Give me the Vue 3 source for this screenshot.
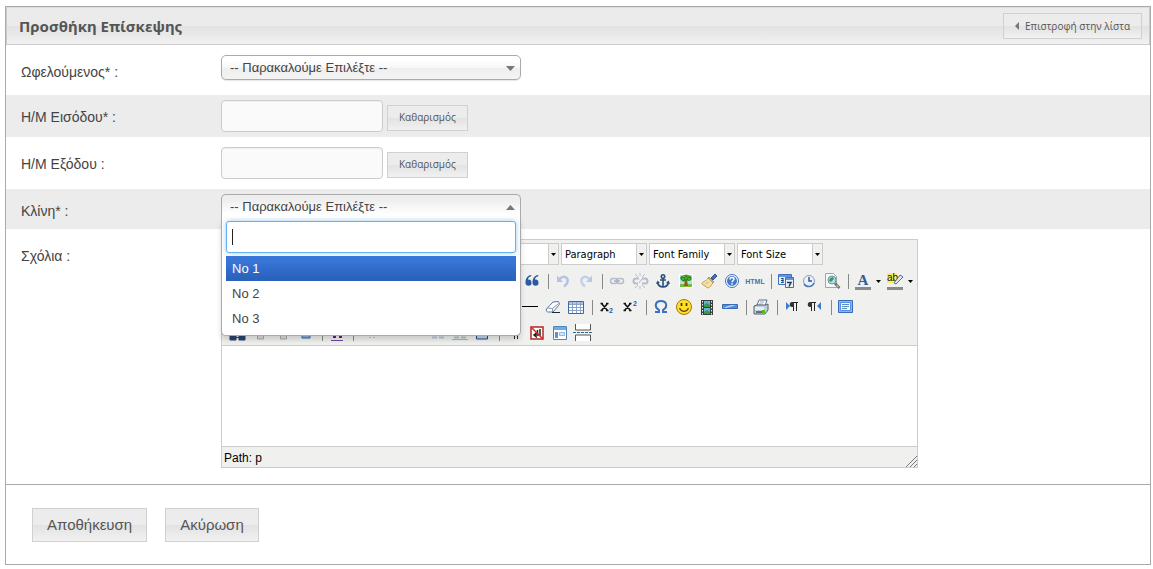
<script setup>
import { ref } from 'vue'

const placeholder = '-- Παρακαλούμε Επιλέξτε --'
const beneficiary = ref('')
const bed = ref('')
const beds = ['No 1', 'No 2', 'No 3']
const highlighted = ref(0)

const lists = [
  { label: 'Styles', text: '' },
  { label: 'Format', text: 'Paragraph' },
  { label: 'Font family', text: 'Font Family' },
  { label: 'Font size', text: 'Font Size' },
]

const sans = 'font-family="Liberation Sans, sans-serif"'
const serif = 'font-family="Liberation Serif, serif"'

const icons = {
  quote: '<path d="M9 4C5 4.500 3.500 8 3.500 11.500A3 3 0 1 0 6 8.700C6 7 7 5.800 9.500 5zM16 4c-4 .5-5.500 4-5.500 7.500A3 3 0 1 0 13 8.700c0-1.700 1-2.900 3.500-3.700z" fill="#2d5a9e"/>',
  undo: '<path d="M6.500 8c4-4 9-2 8 3-.4 2-1.500 3-3.500 4.500" fill="none" stroke="#b4c3e2" stroke-width="2.500"/><path d="M4 4.500v6.500h6z" fill="#b4c3e2"/>',
  redo: '<path d="M13.500 8c-4-4-9-2-8 3 .4 2 1.500 3 3.500 4.500" fill="none" stroke="#c4d1e9" stroke-width="2.500"/><path d="M16 4.500v6.500h-6z" fill="#b9c8e5"/>',
  link: '<g fill="none" stroke="#b5bccb" stroke-width="1.500"><rect x="3.500" y="7.500" width="7" height="5" rx="2.500"/><rect x="9.500" y="7.500" width="7" height="5" rx="2.500"/></g><path d="M7 10h6" stroke="#a5afc4" stroke-width="1.500"/>',
  unlink: '<g fill="none" stroke="#b5bccb" stroke-width="2"><path d="M9 7.500H6a2.500 2.500 0 0 0 0 5h2M12 7.500h3a2.500 2.500 0 0 1 0 5h-3"/></g><path d="M10 2v3M10 15v3M5 3l3 3M15 3l-3 3M5 17l3-3M15 17l-3-3M9 12l3-4" stroke="#b9bdc6"/>',
  anchor: '<g fill="none" stroke="#2b4e7c" stroke-width="1.600"><circle cx="10" cy="5.500" r="1.700"/><path d="M10 7v9M7 9h6M4.500 11c.5 3 2.500 5 5.500 5s5-2 5.500-5"/></g><path d="M3 13l1.500-3.500L7 12zM17 13l-1.500-3.500L13 12z" fill="#2b4e7c"/>',
  image: '<path d="M3 3h14v14H3z" fill="#fff"/><path d="M4 4h12v9H4z" fill="#b9dcf4"/><path d="M4 13h12v3H4z" fill="#76bd32"/><path d="M9 9h2l1 6H8z" fill="#915820"/><path d="M4.500 8c-1-3 2-3 4-4 3-1 8 1 7 4 0 2-3 2.500-5 1.500-2 2-5 1-6-1.500z" fill="#2b8c20"/><path d="M7 5.500h2M11 5h2M12 8h2M6 8h2M9 7h2" stroke="#75c63c"/>',
  cleanup: '<path d="M12 7l4-4 2 2-4 4z" fill="#476fad" stroke="#2d568e"/><path d="M10 6l5 5-2 1-4-5z" fill="#b3bbc4" stroke="#707b86" stroke-width=".7"/><path d="M9 7l5 5c-2 2-3 5-5 5l-6-4c-1-2 5-3 6-6z" fill="#f4e2a6" stroke="#b98e3f" stroke-width=".8"/><path d="M6 13l4-2" stroke="#d9b974"/>',
  help: '<circle cx="10" cy="10" r="6.500" fill="#fff" stroke="#3d72be"/><circle cx="10" cy="10" r="5" fill="#4179cc"/><path d="M8 8.500c0-3 4-2.500 4-.5 0 1.500-2 1.500-2 3.300M10 12.300v1.500" fill="none" stroke="#fff" stroke-width="1.500"/>',
  html: `<text x="10" y="12.500" text-anchor="middle" font-size="7" font-weight="bold" fill="#4178a9" ${sans}>HTML</text>`,
  date: '<path d="M2.500 3.500h13v10h-13z" fill="#e7f0fc" stroke="#3d70b7"/><path d="M3 4h12v2H3z" fill="#6495dc"/><path d="M5 7.500h2.500M5 9.500h2.500M5 11.500h2.500M7 7.500v4" fill="none" stroke="#174378"/><path d="M9.500 6.500h8v10h-8z" fill="#e7f0fc" stroke="#3d70b7"/><path d="M10 7h7v2h-7z" fill="#6495dc"/><path d="M11 11.500h4l-2 4" fill="none" stroke="#22384e" stroke-width="1.500"/>',
  time: '<circle cx="10" cy="10" r="5.500" fill="#eaf2ff" stroke="#879dba"/><path d="M5 13c2 3 8 4 10-1" fill="none" stroke="#4b79b6" stroke-width="1.500"/><path d="M10 6v4h3" fill="none" stroke="#315a90" stroke-width="1.500"/>',
  preview: '<path d="M3.500 2.500h8l3 3v11h-11z" fill="#f3f8fa" stroke="#98a8af"/><circle cx="10" cy="9" r="4" fill="#b8dde9" stroke="#6f949a"/><path d="M8 7l3-1 1 2-3 3-2-1z" fill="#3d9c54"/><path d="M13 12.500l4.500 4.500" stroke="#5e6f80" stroke-width="2.500"/><path d="M14.500 14l2 2" stroke="#d7b053" stroke-width="1.500"/>',
  forecolor: `<text x="10" y="14" text-anchor="middle" font-size="15" font-weight="bold" fill="#315d96" ${serif}>A</text><path d="M2 16h16v3H2z" fill="#8a8a8a"/>`,
  backcolor: `<path d="M2 2h10v10H2z" fill="#fcee61"/><text x="2" y="10" font-size="10" fill="#111" ${sans}>ab</text><path d="M9 12l6-8 3 2-7 7z" fill="#dce7ef" stroke="#4f7298"/><path d="M2 16h16v3H2z" fill="#8a8a8a"/>`,
  rule: '<path d="M2 9.500h16" stroke="#000"/>',
  eraser: '<path d="M3.500 12L10 5l5-.5c2 1 1.500 3 .5 4l-5.500 6.500H5.500c-2 0-2.500-1-2-3z" fill="#fff" stroke="#58729c"/><path d="M4.500 11l5 .5 6-5M9.500 11.500V15" fill="none" stroke="#8198bb"/><path d="M9 15.500h8" stroke="#1f2933"/>',
  table: '<path d="M2.500 4.500h15v12h-15z" fill="#fff" stroke="#42679a"/><path d="M3 5h14v2H3z" fill="#a9c5e9"/><path d="M3 7.500h14M3 10.500h14M3 13.500h14M6.500 5v11M10.500 5v11M14.500 5v11" stroke="#8aa5cb"/>',
  sub: `<path d="M4.500 6.500l6 7M10.500 6.500l-6 7M3.500 6.500H6M9 6.500h2.500M3.500 13.500H6M9 13.500h2.500" stroke="#111" stroke-width="1.600"/><text x="12" y="16" font-size="7" font-weight="bold" fill="#2260b8" ${sans}>2</text>`,
  sup: `<path d="M4.500 6.500l6 7M10.500 6.500l-6 7M3.500 6.500H6M9 6.500h2.500M3.500 13.500H6M9 13.500h2.500" stroke="#111" stroke-width="1.600"/><text x="13" y="9" font-size="7" font-weight="bold" fill="#2260b8" ${sans}>2</text>`,
  omega: '<path d="M4 15h4v-2c-5-3-4-9 2-9s7 6 2 9v2h4" fill="none" stroke="#3c70be" stroke-width="2"/>',
  smile: '<circle cx="10" cy="10" r="7.500" fill="#ffdf27" stroke="#a4780b"/><path d="M7.500 6v3M12.500 6v3" stroke="#4b3600" stroke-width="1.700"/><path d="M5.500 11c2 4.500 7 4.500 9 0" fill="none" stroke="#684900" stroke-width="1.200"/>',
  media: '<path d="M4 3h12v15H4z" fill="#393e3e"/><path d="M7 4h6v6H7zM7 11h6v6H7z" fill="#65b6cf"/><path d="M7 8l3-2 3 2v2H7zM7 15l3-2 3 2v2H7z" fill="#39964a"/><path d="M5.500 4v14M14.500 4v14" stroke="#e4eded" stroke-dasharray="1.500 1.500"/>',
  advhr: '<path d="M2.500 7.500h15v4h-15z" fill="#5a8bd1" stroke="#376bb5"/><path d="M3 11l8-3h5l-9 3z" fill="#b7d2f2"/>',
  print: '<path d="M6 8l2-5h8l-2 6z" fill="#fff" stroke="#54718c"/><path d="M9 5h4M8 7h4" stroke="#93a8b8"/><path d="M3 9l3-1h9l2-1v6l-3 4H3z" fill="#c3ced7" stroke="#4e6579"/><path d="M4 10h9v3H4z" fill="#e8eef1"/><path d="M5 14h8v2H5z" fill="#65717b"/><path d="M11 13h3v3h-3z" fill="#4dbd22"/>',
  ltr: '<path d="M4 5l4 4-4 4z" fill="#3d7bd0"/><path d="M10 5.500h6M11.500 5v9M14.500 5v9" stroke="#222"/><path d="M12 5v5h-2c-3 0-3-5 0-5z" fill="#333"/>',
  rtl: '<path d="M16 5l-4 4 4 4z" fill="#3d7bd0"/><path d="M5 5.500h6M6.500 5v9M9.500 5v9" stroke="#222"/><path d="M7 5v5H5c-3 0-3-5 0-5z" fill="#333"/>',
  full: '<path d="M2.500 3.500h14v12h-14z" fill="#8fb6ea" stroke="#356dbc"/><path d="M4.500 5.500h10v8h-10z" fill="#f1f7ff" stroke="#5b91dc"/><path d="M6 7.500h7M6 9.500h7M6 11.500h5" stroke="#5e8bc8"/>',
  find: '<path d="M3 13h6v4H3zM12 13h6v4h-6zM9 14.500h3" fill="#29446e" stroke="#29446e"/>',
  paste: '<path d="M7.500 12v4h6v-4" fill="#ddd" stroke="#aaa"/>',
  word: '<path d="M6 12h8v3H6z" fill="#8fb2e0" stroke="#3768ae"/>',
  styleprops: '<path d="M6 14h3M12 14h3" stroke="#4c2d75" stroke-width="2"/><path d="M4 17.500h12" stroke="#7443a8"/>',
  cite: '<path d="M11 14.500h2M15 14.500h2" stroke="#b7c8dd"/>',
  ins: '<path d="M5 14.500h5M12 14.500h5" stroke="#b7c8dd" stroke-width="2"/>',
  acronym: '<path d="M4 14.500h5M11 14.500h5" stroke="#b3c5c5" stroke-width="2"/><path d="M2 16.500h16" stroke="#91c98d"/>',
  attribs: '<path d="M3.500 10v6h11v-6" fill="#c2d4eb" stroke="#234c7b"/>',
  pilcrow: '<path d="M10.500 8v8M13.500 8v8" stroke="#222"/>',
  nbsp: '<path d="M4 4h12v12H4z" fill="#fff" stroke="#b72626" stroke-width="1.500"/><path d="M13 6v6H8M10.500 7v5M10 9.500L7 12l3 2.500" fill="none" stroke="#222" stroke-width="1.500"/><path d="M4 4l12 12" stroke="#d52b2b" stroke-width="1.500"/>',
  template: '<path d="M3.500 3.500h13v13h-13z" fill="#fff" stroke="#4b87c2"/><path d="M4 4h12v3H4z" fill="#77aadc"/><path d="M5 9h3v6H5z" fill="#5b91dc"/><path d="M9.500 9.500h5v3h-5z" fill="#d5e7f9" stroke="#8fb7e3"/>',
  pagebreak: '<path d="M2.500 1v6h15V1M2.500 18v-6h15v6" fill="#fff" stroke="#555"/><path d="M0 9.500h20" stroke="#286a9d" stroke-dasharray="3 1"/>',
}

const toolbars = [
  { name: 'links', items: ['quote', '|', 'undo', 'redo', '|', 'link', 'unlink', 'anchor', 'image', 'cleanup', 'help', 'html', '|', 'date', 'time', 'preview', '|', 'forecolor', 'v', 'backcolor', 'v'] },
  { name: 'insert', items: ['rule', 'eraser', 'table', '|', 'sub', 'sup', '|', 'omega', 'smile', 'media', 'advhr', '|', 'print', '|', 'ltr', 'rtl', '|', 'full'] },
  { name: 'extras', items: ['find', 'paste', 'paste', 'word', '|', 'styleprops', '|', 'cite', '', '', 'ins', 'acronym', 'attribs', '|', 'pilcrow', 'nbsp', 'template', 'pagebreak'] },
]
</script>

<template>
  <form class="panel" @submit.prevent>
    <header class="head">
      <h1>Προσθήκη Επίσκεψης</h1>
      <button type="button" class="btn small back">
        <svg width="4" height="8" viewBox="0 0 4 8" aria-hidden="true"><path d="M4 0v8L0 4z" fill="#777" /></svg>
        Επιστροφή στην λίστα
      </button>
    </header>

    <div class="row first">
      <label class="name" for="beneficiary">Ωφελούμενος* :</label>
      <div class="choice">
        <select id="beneficiary" v-model="beneficiary"><option value="">{{ placeholder }}</option></select>
        <svg class="caret" width="9" height="5" viewBox="0 0 9 5" aria-hidden="true"><path d="M0 0h9L4.500 5z" /></svg>
      </div>
    </div>

    <div class="row alt">
      <label class="name" for="entry">Η/Μ Εισόδου* :</label>
      <div class="date">
        <input id="entry" type="text" />
        <button type="button" class="btn small">Καθαρισμός</button>
      </div>
    </div>

    <div class="row">
      <label class="name" for="exit">Η/Μ Εξόδου :</label>
      <div class="date">
        <input id="exit" type="text" />
        <button type="button" class="btn small">Καθαρισμός</button>
      </div>
    </div>

    <div class="row alt bed">
      <label class="name" for="bed">Κλίνη* :</label>
      <div class="choice open">
        <select id="bed" v-model="bed"><option value="">{{ placeholder }}</option></select>
        <svg class="caret" width="9" height="5" viewBox="0 0 9 5" aria-hidden="true"><path d="M0 5h9L4.500 0z" /></svg>
        <div class="drop">
          <div class="search">
            <input type="text" aria-label="Κλίνη" />
            <span class="cursor"></span>
          </div>
          <ul role="listbox">
            <li v-for="(b, i) in beds" :key="b" role="option" :class="{ on: i === highlighted }" @mouseenter="highlighted = i">{{ b }}</li>
          </ul>
        </div>
      </div>
    </div>

    <div class="row notes">
      <label class="name" for="notes">Σχόλια :</label>
      <div class="editor">
        <div class="tools">
          <div class="lists">
            <div v-for="l in lists" :key="l.label" class="list">
              <select :aria-label="l.label"><option>{{ l.text }}</option></select>
              <svg width="5" height="3" viewBox="0 0 5 3" aria-hidden="true"><path d="M0 0h5L2.500 3z" /></svg>
            </div>
          </div>
          <div v-for="bar in toolbars" :key="bar.name" class="bar" :class="bar.name">
            <template v-for="(item, i) in bar.items" :key="i">
              <span v-if="item === '|'" class="sep"></span>
              <button v-else-if="item === 'v'" type="button" class="more" aria-label="more">
                <svg width="5" height="3" viewBox="0 0 5 3"><path d="M0 0h5L2.500 3z" /></svg>
              </button>
              <button v-else type="button" class="tool" :aria-label="item">
                <svg width="20" height="20" viewBox="0 0 20 20" v-html="icons[item]"></svg>
              </button>
            </template>
          </div>
        </div>
        <textarea id="notes"></textarea>
        <div class="status">
          <span>Path: p</span>
          <svg width="11" height="11" viewBox="0 0 11 11" aria-hidden="true"><path d="M0 11L11 0M4 11l7-7M8 11l3-3" stroke="#777" /></svg>
        </div>
      </div>
    </div>

    <footer class="foot">
      <button type="submit" class="btn">Αποθήκευση</button>
      <button type="button" class="btn">Ακύρωση</button>
    </footer>
  </form>
</template>

<style>
body {
  background: #fff;
}
</style>

<style scoped>
* {
  box-sizing: border-box;
}
.panel {
  margin: 6px 2px 4px 5px;
  border: 1px solid #aaa;
  font: 14px "Liberation Sans", Arial, sans-serif;
  color: #444;
}
button, input, select, textarea {
  font: inherit;
  color: inherit;
  margin: 0;
}
.head {
  display: flex;
  align-items: center;
  justify-content: space-between;
  height: 38px;
  padding: 0 7px 0 12px;
  border: 1px solid #ccc;
  border-top-color: #ddd;
  background: linear-gradient(#ebebeb 0 50%, #e2e2e2 50%, #f1f1f1);
}
h1 {
  margin: 0;
  font: bold 15px "Noto Sans", sans-serif;
  color: #555;
}
.btn {
  height: 34px;
  padding: 0 14px 2px;
  border: 1px solid #d0d0d0;
  background: linear-gradient(#ececec 0 50%, #e2e2e2 50%, #f1f1f1);
  font-size: 15px;
  color: #555;
}
.btn.small {
  height: 26px;
  padding: 0 11px 2px;
  font: 10px "Open Sans", sans-serif;
}
.btn.back {
  display: flex;
  align-items: center;
  gap: 6px;
  padding: 0 11px;
}
.row {
  display: flex;
  align-items: flex-start;
  padding: 10px 0 10px 15px;
}
.row.first {
  padding-bottom: 8px;
}
.row.alt {
  padding-top: 5px;
  padding-bottom: 5px;
  background: #ececec;
}
.row.bed {
  padding-bottom: 3px;
}
.row.notes {
  padding-bottom: 16px;
}
.name {
  flex: none;
  width: 200px;
  padding-top: 2px;
  line-height: 30px;
}
.choice {
  position: relative;
  width: 300px;
  font-size: 13px;
}
.choice > select {
  display: block;
  appearance: none;
  width: 100%;
  height: 25px;
  padding: 0 24px 0 8px;
  border: 1px solid #aaa;
  border-radius: 5px;
  background: linear-gradient(#fff 20%, #f6f6f6 50%, #eee 52%, #f4f4f4);
  box-shadow: 0 1px 1px rgba(0, 0, 0, 0.1);
}
.open > select {
  padding-bottom: 2px;
  border-bottom: 0;
  border-radius: 5px 5px 0 0;
  background: linear-gradient(#eee 20%, #fff 80%);
  box-shadow: none;
}
.caret {
  position: absolute;
  right: 6px;
  top: 11px;
  fill: #777;
}
.drop {
  position: absolute;
  z-index: 2;
  top: 25px;
  left: 0;
  right: 0;
  padding: 2px 4px 4px;
  border: 1px solid #aaa;
  border-top: 0;
  border-radius: 0 0 5px 5px;
  background: #fff;
  box-shadow: 0 4px 5px rgba(0, 0, 0, 0.15);
}
.search {
  position: relative;
}
.search input {
  display: block;
  width: 100%;
  height: 32px;
  padding: 0 6px;
  border: 1px solid #67b0ee;
  border-radius: 3px;
  outline: 0;
  background: #fff;
  box-shadow: 0 0 5px rgba(82, 168, 236, 0.6);
}
.cursor {
  position: absolute;
  left: 6px;
  top: 8px;
  width: 1px;
  height: 16px;
  background: #222;
}
ul {
  margin: 3px 0 0;
  padding: 0;
  list-style: none;
}
li {
  padding: 0 6px;
  line-height: 25px;
}
li.on {
  background: linear-gradient(#3875d7 20%, #2a62bc 90%);
  color: #fff;
}
.date {
  display: flex;
  gap: 4px;
}
.date input {
  width: 162px;
  height: 32px;
  border: 1px solid #ccc;
  border-radius: 4px;
  background: #fafafa;
  box-shadow: inset 0 1px 1px rgba(0, 0, 0, 0.05);
}
.date .btn {
  margin-top: 5px;
}
.editor {
  width: 697px;
  border: 1px solid #ccc;
  background: #fff;
}
.tools {
  height: 106px;
  padding-top: 3px;
  border-bottom: 1px solid #ccc;
  background: #f0f0ee;
}
.lists {
  display: flex;
  gap: 2px;
  padding-left: 251px;
  margin-bottom: 3px;
}
.list {
  position: relative;
  width: 86px;
  height: 22px;
}
.list select {
  display: block;
  appearance: none;
  width: 100%;
  height: 100%;
  padding: 0 0 0 3px;
  border: 1px solid #ccc;
  border-radius: 0;
  background: linear-gradient(90deg, #fff 74px, #ccc 74px 75px, #f0f0ee 75px);
  font: 11px "DejaVu Sans Condensed", "DejaVu Sans", sans-serif;
  color: #000;
}
.list svg {
  position: absolute;
  right: 3px;
  top: 10px;
}
.bar {
  display: flex;
  height: 26px;
  align-items: center;
}
.links {
  padding-left: 298px;
}
.insert {
  padding-left: 296px;
}
.extras {
  padding-left: 3px;
}
.tool, .more {
  display: flex;
  flex: none;
  align-items: center;
  justify-content: center;
  width: 23px;
  height: 22px;
  padding: 0;
  border: 0;
  background: none;
}
.more {
  width: 9px;
}
.sep {
  flex: none;
  width: 1px;
  height: 15px;
  margin: 0 2px 0 5px;
  background: #888;
}
textarea {
  display: block;
  width: 100%;
  height: 100px;
  padding: 8px;
  border: 0;
  outline: 0;
  resize: none;
}
.status {
  display: flex;
  align-items: flex-end;
  justify-content: space-between;
  height: 21px;
  padding-left: 2px;
  border-top: 1px solid #ccc;
  background: #f0f0ee;
  font-size: 12px;
  line-height: 18px;
  color: #000;
}
.foot {
  display: flex;
  gap: 18px;
  padding: 23px 26px 22px;
  border-top: 1px solid #aaa;
}
</style>
